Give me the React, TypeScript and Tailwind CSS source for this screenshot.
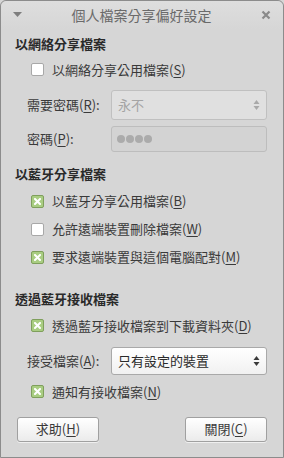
import React from "react";

const font = { fontFamily: '"Noto Sans CJK TC", "Noto Sans", "DejaVu Sans", sans-serif' };

const U = ({ c }: { c: string }) => <span className="underline underline-offset-2">{c}</span>;

const Check = ({ on }: { on: boolean }) =>
  on ? (
    <span className="flex h-[13px] w-[13px] items-center justify-center rounded-[2px] border border-[#7f9f5c] bg-[#a9cd82]">
      <svg width="7" height="7" viewBox="0 0 7 7">
        <path d="M1 1L6 6M6 1L1 6" stroke="#ffffff" strokeWidth="2" strokeLinecap="square" />
      </svg>
    </span>
  ) : (
    <span className="h-[13px] w-[13px] rounded-[2px] border border-[#a8a8a8] bg-white" />
  );

const Row = ({ on, children }: { on: boolean; children: React.ReactNode }) => (
  <div className="flex h-[28px] items-center gap-[8px] pl-[30px]">
    <Check on={on} />
    <span className="text-[13px] text-[#3a3a3a]">{children}</span>
  </div>
);

const Arrows = ({ dim }: { dim?: boolean }) => (
  <svg width="7" height="12" viewBox="0 0 7 12">
    <path d="M3.5 1L6.5 5H0.5Z" fill={dim ? "#a8a8a8" : "#3a3a3a"} />
    <path d="M3.5 11L6.5 7H0.5Z" fill={dim ? "#a8a8a8" : "#3a3a3a"} />
  </svg>
);

export default function App() {
  return (
    <div className="h-[458px] w-[284px] bg-[#d6d6d6]" style={font}>
      <div className="flex h-[458px] flex-col rounded-t-[6px] border border-[#8c8c8c] bg-[#d6d6d6]">
        <header className="flex h-[28px] items-center justify-between rounded-t-[6px] bg-gradient-to-b from-[#dedede] to-[#d6d6d6] px-[12px]">
          <svg width="9" height="6" viewBox="0 0 9 6">
            <path d="M0 0H9L4.5 5Z" fill="#7e7e7e" />
          </svg>
          <span className="text-[14px] text-[#6a6a6a]">個人檔案分享偏好設定</span>
          <svg width="10" height="10" viewBox="0 0 10 10">
            <path d="M1.5 1.5L8.5 8.5M8.5 1.5L1.5 8.5" stroke="#8a8a8a" strokeWidth="2.2" />
          </svg>
        </header>

        <section className="px-[14px] pt-[5px]">
          <h2 className="text-[13px] font-bold text-[#2a2a2a]">以網絡分享檔案</h2>
        </section>
        <div className="mt-[2px]">
          <Row on={false}>
            以網絡分享公用檔案(<U c="S" />)
          </Row>
        </div>
        <div className="mt-[6px] flex items-center pl-[26px] pr-[16px]">
          <span className="w-[84px] text-[13px] text-[#3a3a3a]">
            需要密碼(<U c="R" />):
          </span>
          <div className="flex h-[30px] flex-1 items-center justify-between rounded-[3px] border border-[#c0c0c0] bg-[#e0e0e0] px-[6px]">
            <span className="text-[13px] text-[#a4a4a4]">永不</span>
            <Arrows dim />
          </div>
        </div>
        <div className="mt-[6px] flex items-center pl-[26px] pr-[16px]">
          <span className="w-[84px] text-[13px] text-[#3a3a3a]">
            密碼(<U c="P" />):
          </span>
          <div className="flex h-[26px] flex-1 items-center gap-[1px] rounded-[3px] border border-[#bdbdbd] bg-[#d3d3d3] px-[5px]">
            {[0, 1, 2, 3].map((i) => (
              <span key={i} className="h-[8px] w-[8px] rounded-full bg-[#ababab]" />
            ))}
          </div>
        </div>

        <section className="px-[14px] pt-[12px]">
          <h2 className="text-[13px] font-bold text-[#2a2a2a]">以藍牙分享檔案</h2>
        </section>
        <div className="mt-[4px]">
          <Row on>
            以藍牙分享公用檔案(<U c="B" />)
          </Row>
          <Row on={false}>
            允許遠端裝置刪除檔案(<U c="W" />)
          </Row>
          <Row on>
            要求遠端裝置與這個電腦配對(<U c="M" />)
          </Row>
        </div>

        <section className="px-[14px] pt-[18px]">
          <h2 className="text-[13px] font-bold text-[#2a2a2a]">透過藍牙接收檔案</h2>
        </section>
        <div className="mt-[3px]">
          <Row on>
            透過藍牙接收檔案到下載資料夾(<U c="D" />)
          </Row>
        </div>
        <div className="mt-[7px] flex items-center pl-[26px] pr-[16px]">
          <span className="w-[84px] text-[13px] text-[#3a3a3a]">
            接受檔案(<U c="A" />):
          </span>
          <div className="flex h-[28px] flex-1 items-center justify-between rounded-[3px] border border-[#a9a9a9] bg-gradient-to-b from-white to-[#f1f1f1] px-[6px]">
            <span className="text-[13px] text-[#2a2a2a]">只有設定的裝置</span>
            <Arrows />
          </div>
        </div>
        <div className="mt-[3px]">
          <Row on>
            通知有接收檔案(<U c="N" />)
          </Row>
        </div>

        <footer className="mt-[11px] flex justify-between pl-[16px] pr-[16px]">
          <button className="h-[25px] w-[82px] rounded-[3px] border border-[#a0a0a0] bg-gradient-to-b from-white to-[#ebebeb] text-[13px] text-[#3a3a3a] shadow-[0_1px_0_rgba(255,255,255,0.6)]">
            求助(<U c="H" />)
          </button>
          <button className="h-[25px] w-[82px] rounded-[3px] border border-[#a0a0a0] bg-gradient-to-b from-white to-[#ebebeb] text-[13px] text-[#3a3a3a] shadow-[0_1px_0_rgba(255,255,255,0.6)]">
            關閉(<U c="C" />)
          </button>
        </footer>
      </div>
    </div>
  );
}
